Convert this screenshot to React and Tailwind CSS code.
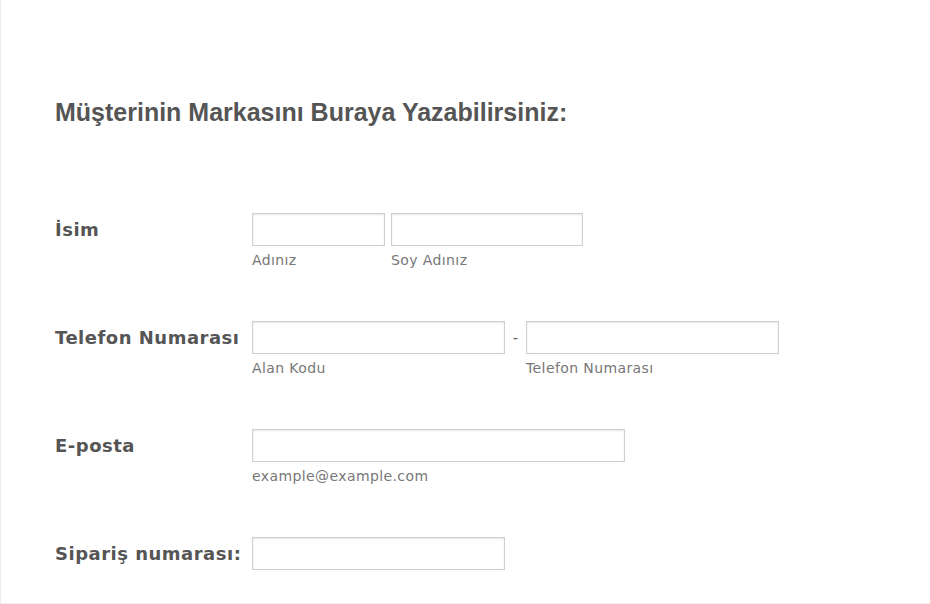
import React from 'react'

const labelCls = "w-[197px] shrink-0 pt-[3px] text-[18px] leading-[27px] tracking-[0.5px] font-bold text-[#555] [font-family:'DejaVu_Sans',Verdana,sans-serif]"
const subCls = "mt-[4px] text-[14px] leading-[20px] tracking-[0.4px] text-[#777] [font-family:'DejaVu_Sans',Verdana,sans-serif]"
const inputCls = "block h-[33px] shrink-0 border border-[#cfcfcf] bg-white shadow-[inset_0_1px_2px_rgba(0,0,0,0.1)] outline-none"

function Field({ width, sub }) {
    return (
        <div className="flex flex-col">
            <input className={inputCls} style={{ width }} />
            {sub && <span className={subCls}>{sub}</span>}
        </div>
    )
}

export default function App() {
    return (
        <div className="h-[604px] w-[930px] overflow-hidden bg-white border-l border-b border-[#eeeeee]">
            <div className="pl-[54px] pt-[97px]">
                <h1 className="text-[25px] font-bold text-[#555] [font-family:'Liberation_Sans',Arial,sans-serif] leading-[30px]">
                    Müşterinin Markasını Buraya Yazabilirsiniz:
                </h1>

                <div className="mt-[86px] flex flex-col">
                    {/* İsim */}
                    <div className="flex h-[108px] items-start">
                        <label className={labelCls}>İsim</label>
                        <div className="flex gap-[6px]">
                            <Field width={133} sub="Adınız" />
                            <Field width={192} sub="Soy Adınız" />
                        </div>
                    </div>

                    {/* Telefon */}
                    <div className="flex h-[108px] items-start">
                        <label className={labelCls}>Telefon Numarası</label>
                        <div className="flex">
                            <Field width={253} sub="Alan Kodu" />
                            <span className="w-[21px] pt-[6px] text-center text-[15px] text-[#666] [font-family:'DejaVu_Sans',Verdana,sans-serif]">-</span>
                            <Field width={253} sub="Telefon Numarası" />
                        </div>
                    </div>

                    {/* E-posta */}
                    <div className="flex h-[108px] items-start">
                        <label className={labelCls}>E-posta</label>
                        <Field width={373} sub="example@example.com" />
                    </div>

                    {/* Sipariş */}
                    <div className="flex h-[108px] items-start">
                        <label className={labelCls}>Sipariş numarası:</label>
                        <Field width={253} />
                    </div>
                </div>
            </div>
        </div>
    )
}
